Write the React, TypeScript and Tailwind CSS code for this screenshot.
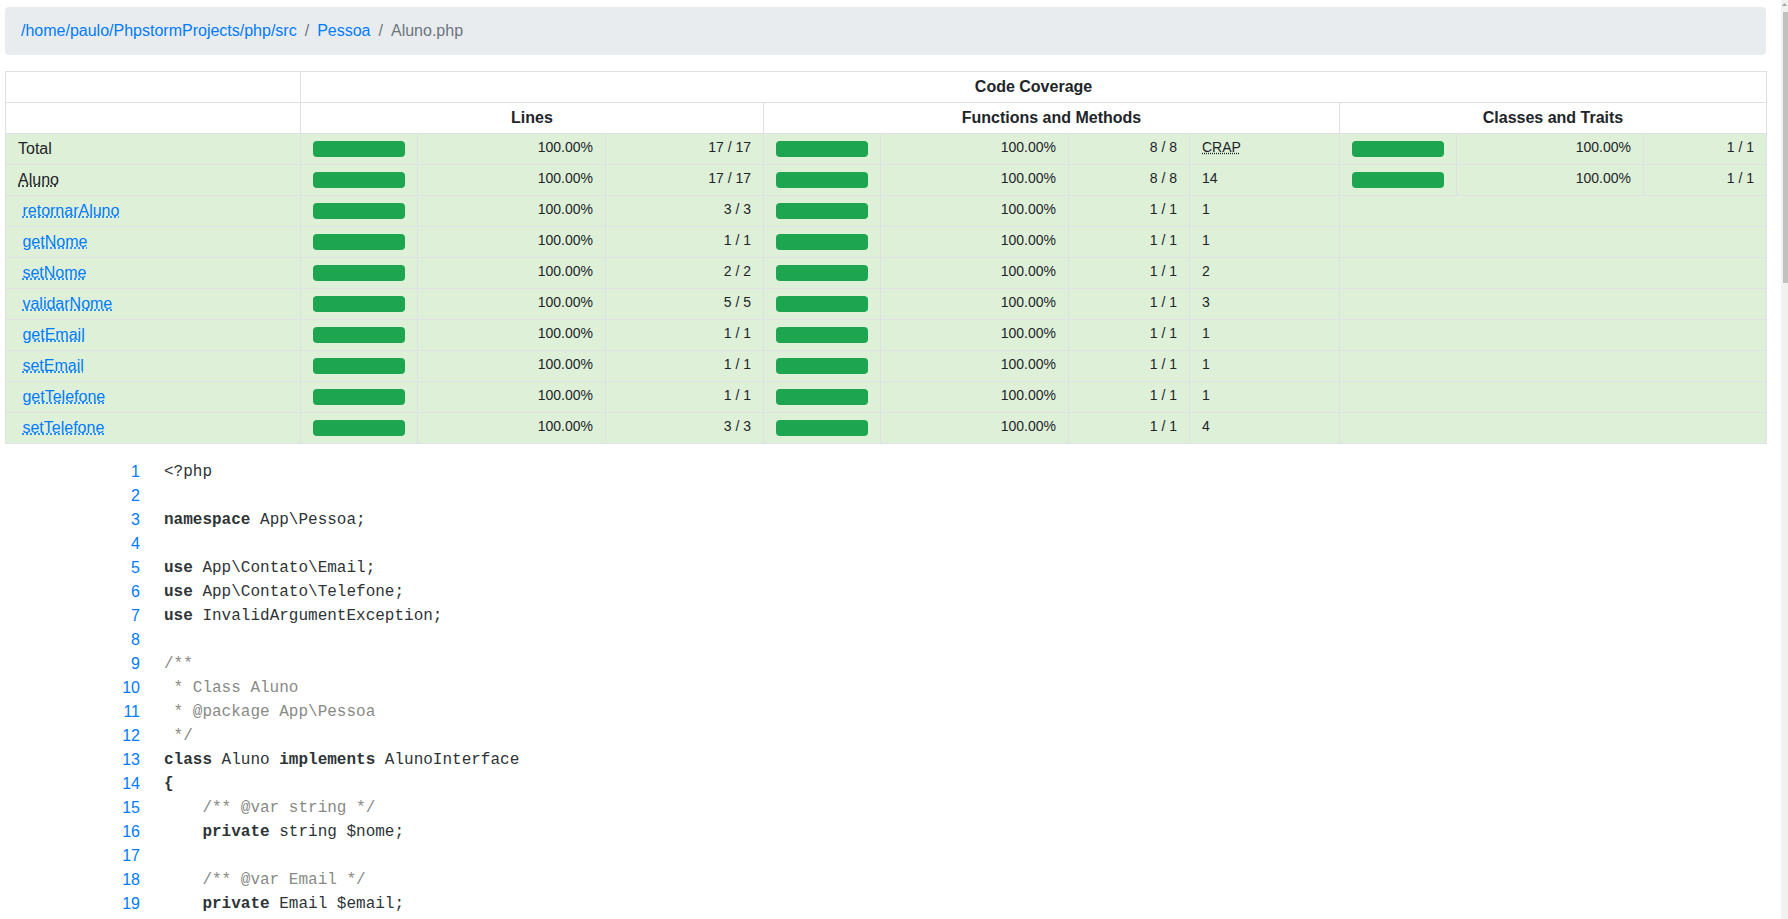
import React from "react";

type Row = {
  name: string;
  kind: "total" | "class" | "method";
  lines: string;
  funcs: string;
  crap: string;
  classes?: string;
};

const nb = (a: number, b: number) => `${a}\u00a0/\u00a0${b}`;

const rows: Row[] = [
  { name: "Total", kind: "total", lines: nb(17, 17), funcs: nb(8, 8), crap: "CRAP", classes: nb(1, 1) },
  { name: "Aluno", kind: "class", lines: nb(17, 17), funcs: nb(8, 8), crap: "14", classes: nb(1, 1) },
  { name: "retornarAluno", kind: "method", lines: nb(3, 3), funcs: nb(1, 1), crap: "1" },
  { name: "getNome", kind: "method", lines: nb(1, 1), funcs: nb(1, 1), crap: "1" },
  { name: "setNome", kind: "method", lines: nb(2, 2), funcs: nb(1, 1), crap: "2" },
  { name: "validarNome", kind: "method", lines: nb(5, 5), funcs: nb(1, 1), crap: "3" },
  { name: "getEmail", kind: "method", lines: nb(1, 1), funcs: nb(1, 1), crap: "1" },
  { name: "setEmail", kind: "method", lines: nb(1, 1), funcs: nb(1, 1), crap: "1" },
  { name: "getTelefone", kind: "method", lines: nb(1, 1), funcs: nb(1, 1), crap: "1" },
  { name: "setTelefone", kind: "method", lines: nb(3, 3), funcs: nb(1, 1), crap: "4" },
];

type Tok = { t: string; k?: "kw" | "cm" };

const code: Tok[][] = [
  [{ t: "<?php" }],
  [],
  [{ t: "namespace", k: "kw" }, { t: " App\\Pessoa;" }],
  [],
  [{ t: "use", k: "kw" }, { t: " App\\Contato\\Email;" }],
  [{ t: "use", k: "kw" }, { t: " App\\Contato\\Telefone;" }],
  [{ t: "use", k: "kw" }, { t: " InvalidArgumentException;" }],
  [],
  [{ t: "/**", k: "cm" }],
  [{ t: " * Class Aluno", k: "cm" }],
  [{ t: " * @package App\\Pessoa", k: "cm" }],
  [{ t: " */", k: "cm" }],
  [{ t: "class", k: "kw" }, { t: " Aluno " }, { t: "implements", k: "kw" }, { t: " AlunoInterface" }],
  [{ t: "{", k: "kw" }],
  [{ t: "    /** @var string */", k: "cm" }],
  [{ t: "    " }, { t: "private", k: "kw" }, { t: " string $nome;" }],
  [],
  [{ t: "    /** @var Email */", k: "cm" }],
  [{ t: "    " }, { t: "private", k: "kw" }, { t: " Email $email;" }],
];

const cell = "border border-[#dee2e6] px-3 py-[3px] align-top";
const green = "bg-[#dff0d8]";

function Bar() {
  return <div className="my-1 h-4 rounded bg-[#1da64f]" />;
}

function Small({ children, right = true }: { children: React.ReactNode; right?: boolean }) {
  return (
    <td className={`${cell} ${green} text-[14px] leading-[21px] ${right ? "text-right" : "text-left"}`}>
      {children}
    </td>
  );
}

function NameCell({ row }: { row: Row }) {
  if (row.kind === "total") return <td className={`${cell} ${green}`}>Total</td>;
  if (row.kind === "class")
    return (
      <td className={`${cell} ${green}`}>
        <abbr className="underline decoration-dotted" title="App\Pessoa\Aluno">
          {row.name}
        </abbr>
      </td>
    );
  return (
    <td className={`${cell} ${green}`}>
      {"\u00a0"}
      <a href="#" className="text-[#007bff] underline decoration-dotted">
        {row.name}
      </a>
    </td>
  );
}

export default function App() {
  return (
    <div className="flex h-[919px] w-[1788px] overflow-hidden bg-white font-['Liberation_Sans',Arial,sans-serif] text-base leading-6 text-[#212529]">
      <div className="min-w-0 flex-1 pl-[5px] pr-[15px] pt-[7px]">
        <nav className="rounded bg-[#e9ecef] px-4 py-3">
          <a href="#" className="text-[#007bff]">/home/paulo/PhpstormProjects/php/src</a>
          <span className="px-2 text-[#6c757d]">/</span>
          <a href="#" className="text-[#007bff]">Pessoa</a>
          <span className="px-2 text-[#6c757d]">/</span>
          <span className="text-[#6c757d]">Aluno.php</span>
        </nav>

        <table className="mt-4 w-full table-fixed border-collapse">
          <colgroup>
            <col className="w-[295px]" />
            <col className="w-[117px]" />
            <col className="w-[188px]" />
            <col className="w-[158px]" />
            <col className="w-[117px]" />
            <col className="w-[188px]" />
            <col className="w-[121px]" />
            <col className="w-[150px]" />
            <col className="w-[117px]" />
            <col className="w-[187px]" />
            <col className="w-[123px]" />
          </colgroup>
          <thead>
            <tr>
              <td className={cell}>&nbsp;</td>
              <td colSpan={10} className={`${cell} text-center font-bold`}>Code Coverage</td>
            </tr>
            <tr>
              <td className={cell}>&nbsp;</td>
              <td colSpan={3} className={`${cell} text-center font-bold`}>Lines</td>
              <td colSpan={4} className={`${cell} text-center font-bold`}>Functions and Methods</td>
              <td colSpan={3} className={`${cell} text-center font-bold`}>Classes and Traits</td>
            </tr>
          </thead>
          <tbody>
            {rows.map((r) => (
              <tr key={r.name}>
                <NameCell row={r} />
                <td className={`${cell} ${green}`}><Bar /></td>
                <Small>100.00%</Small>
                <Small>{r.lines}</Small>
                <td className={`${cell} ${green}`}><Bar /></td>
                <Small>100.00%</Small>
                <Small>{r.funcs}</Small>
                <Small right={false}>
                  {r.crap === "CRAP" ? (
                    <abbr className="underline decoration-dotted" title="Change Risk Anti-Patterns (CRAP) Index">CRAP</abbr>
                  ) : (
                    r.crap
                  )}
                </Small>
                {r.classes ? (
                  <>
                    <td className={`${cell} ${green}`}><Bar /></td>
                    <Small>100.00%</Small>
                    <Small>{r.classes}</Small>
                  </>
                ) : (
                  <td colSpan={3} className={`${cell} ${green}`} />
                )}
              </tr>
            ))}
          </tbody>
        </table>

        <div className="mt-4">
          {code.map((line, i) => (
            <div key={i} className="flex h-6">
              <div className="w-[147px] shrink-0 pr-3 text-right text-[#007bff]">{i + 1}</div>
              <div className="whitespace-pre pl-3 font-['Liberation_Mono','Courier_New',monospace] text-[#2e3436]">
                {line.map((tk, j) => (
                  <span
                    key={j}
                    className={tk.k === "kw" ? "font-bold" : tk.k === "cm" ? "text-[#888a85]" : ""}
                  >
                    {tk.t}
                  </span>
                ))}
              </div>
            </div>
          ))}
        </div>
      </div>

      {/* scrollbar */}
      <div className="flex w-[7px] shrink-0 flex-col items-end bg-[#f1f1f1]">
        <svg width="7" height="10" viewBox="0 0 7 10" className="shrink-0">
          <path d="M3.5 3 L6 6 L1 6 Z" fill="#a3a3a3" />
        </svg>
        <div className="mt-[2px] h-[271px] w-[5px] bg-[#c1c1c1]" />
      </div>
    </div>
  );
}
